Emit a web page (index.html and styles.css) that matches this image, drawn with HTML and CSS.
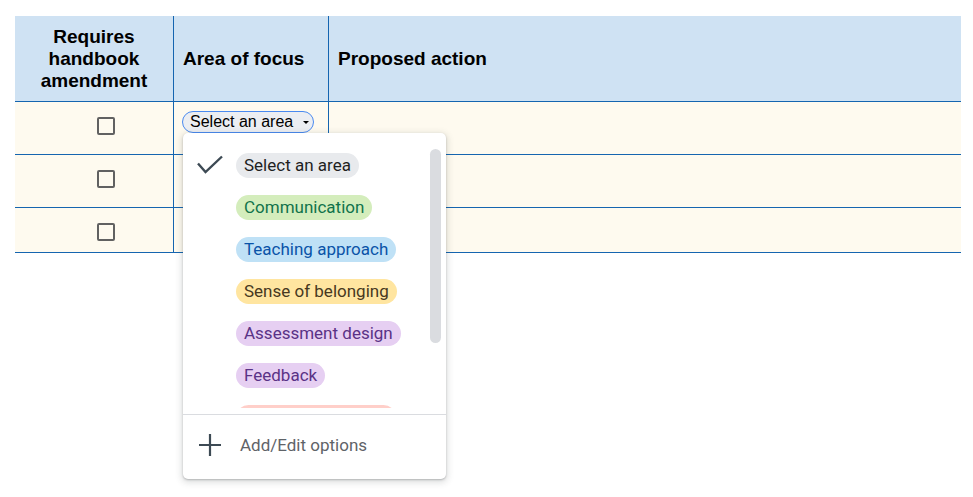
FILE: index.html
```html
<!DOCTYPE html>
<html lang="en">
<head>
  <meta charset="UTF-8">
  <meta name="viewport" content="width=device-width, initial-scale=1.0">
  <title>Handbook review</title>
  <link rel="stylesheet" href="styles.css">
</head>
<body>
  <div class="sheet">
    <div class="cell head head-center">Requires<br>handbook<br>amendment</div>
    <div class="cell head">Area of focus</div>
    <div class="cell head">Proposed action</div>

    <div class="cell row box-cell"><span class="checkbox"></span></div>
    <div class="cell row area-cell">
      <span class="select-chip">Select an area <span class="caret"></span></span>
      <div class="menu">
        <div class="menu-list">
          <div class="item">
            <span class="check-slot">
              <svg width="26" height="20" viewBox="0 0 26 20"><path d="M1 8.5 L8.5 17 L25 1.5" fill="none" stroke="#3d4a54" stroke-width="2.4"/></svg>
            </span>
            <span class="chip chip-grey">Select an area</span>
          </div>
          <div class="item"><span class="check-slot"></span><span class="chip chip-green">Communication</span></div>
          <div class="item"><span class="check-slot"></span><span class="chip chip-blue">Teaching approach</span></div>
          <div class="item"><span class="check-slot"></span><span class="chip chip-yellow">Sense of belonging</span></div>
          <div class="item"><span class="check-slot"></span><span class="chip chip-purple">Assessment design</span></div>
          <div class="item"><span class="check-slot"></span><span class="chip chip-purple">Feedback</span></div>
          <!-- next option, scrolled out of view -->
          <div class="item"><span class="check-slot"></span><span class="chip chip-red chip-peek"></span></div>
        </div>
        <div class="scrollbar"></div>
        <div class="menu-footer">
          <svg width="22" height="22" viewBox="0 0 22 22"><path d="M11 0 V22 M0 11 H22" stroke="#3d4a54" stroke-width="2.2"/></svg>
          <span class="footer-label">Add/Edit options</span>
        </div>
      </div>
    </div>
    <div class="cell row"></div>

    <div class="cell row box-cell"><span class="checkbox"></span></div>
    <div class="cell row"></div>
    <div class="cell row"></div>

    <div class="cell row last box-cell"><span class="checkbox"></span></div>
    <div class="cell row last"></div>
    <div class="cell row last"></div>
  </div>
</body>
</html>
```

FILE: styles.css
```css
* {
  margin: 0;
  padding: 0;
  box-sizing: border-box;
}

html,
body {
  height: 100%;
}

body {
  min-height: 497px;
  background: #fff;
  font-family: 'Liberation Sans', Arial, sans-serif;
  padding: 16px 0 0 15px;
}

.sheet {
  display: grid;
  grid-template-columns: 158px 155px 633px;
  grid-template-rows: 86px 53px 53px 45px;
}

.cell {
  border-bottom: 1px solid #1565b0;
  background: #fefaef;
}

.cell:nth-child(3n+2),
.cell:nth-child(3n+3) {
  border-left: 1px solid #1565b0;
}

.head {
  background: #cfe2f3;
  color: #000;
  font-weight: bold;
  font-size: 19px;
  line-height: 22px;
  display: flex;
  align-items: center;
  padding-left: 9px;
}

.head-center {
  justify-content: center;
  text-align: center;
  padding-left: 0;
  padding-top: 1px;
}

.box-cell {
  padding: 15px 0 0 82px;
}

.checkbox {
  display: block;
  width: 18px;
  height: 18px;
  border: 2px solid #616161;
  border-radius: 2px;
}

.area-cell {
  position: relative;
  padding: 9px 0 0 8px;
}

.select-chip {
  display: inline-flex;
  align-items: center;
  height: 22px;
  width: 132px;
  padding: 0 0 0 7px;
  border: 1px solid #4a8af0;
  border-radius: 11px;
  background: #eceef2;
  font-size: 16px;
  color: #000;
  white-space: nowrap;
}

.caret {
  display: inline-block;
  margin-left: 10px;
  border-left: 3px solid transparent;
  border-right: 3px solid transparent;
  border-top: 3px solid #000;
}

.menu {
  position: absolute;
  top: 31px;
  left: 9px;
  width: 263px;
  height: 346px;
  background: #fff;
  border-radius: 5px;
  box-shadow: 0 1px 2px rgba(60, 64, 67, 0.3), 0 2px 6px 2px rgba(60, 64, 67, 0.15);
  font-family: Roboto, 'Liberation Sans', sans-serif;
  z-index: 2;
}

.menu-list {
  height: 267px;
  margin-top: 8px;
  padding-top: 3px;
  overflow: hidden;
}

.item {
  display: flex;
  align-items: center;
  height: 42px;
}

.check-slot {
  width: 53px;
  padding-left: 14px;
  display: flex;
}

.chip {
  height: 25px;
  line-height: 25px;
  padding: 0 8px;
  border-radius: 13px;
  font-size: 17px;
  white-space: nowrap;
}

.chip-peek {
  width: 160px;
}

.chip-grey { background: #e8eaed; color: #1f1f1f; }
.chip-green { background: #d4edbc; color: #11734b; }
.chip-blue { background: #bfe1f6; color: #0a53a8; }
.chip-yellow { background: #ffe5a0; color: #473821; }
.chip-purple { background: #e6cff2; color: #5a3286; }
.chip-red { background: #ffcfc9; color: #b10202; }

.scrollbar {
  position: absolute;
  top: 16px;
  right: 5px;
  width: 11px;
  height: 194px;
  border-radius: 6px;
  background: #dadce0;
}

.menu-footer {
  margin-top: 6px;
  border-top: 1px solid #dadce0;
  height: 65px;
  display: flex;
  align-items: center;
  padding: 0 0 4px 16px;
}

.footer-label {
  margin-left: 19px;
  font-size: 17px;
  color: #5f6368;
}
```
